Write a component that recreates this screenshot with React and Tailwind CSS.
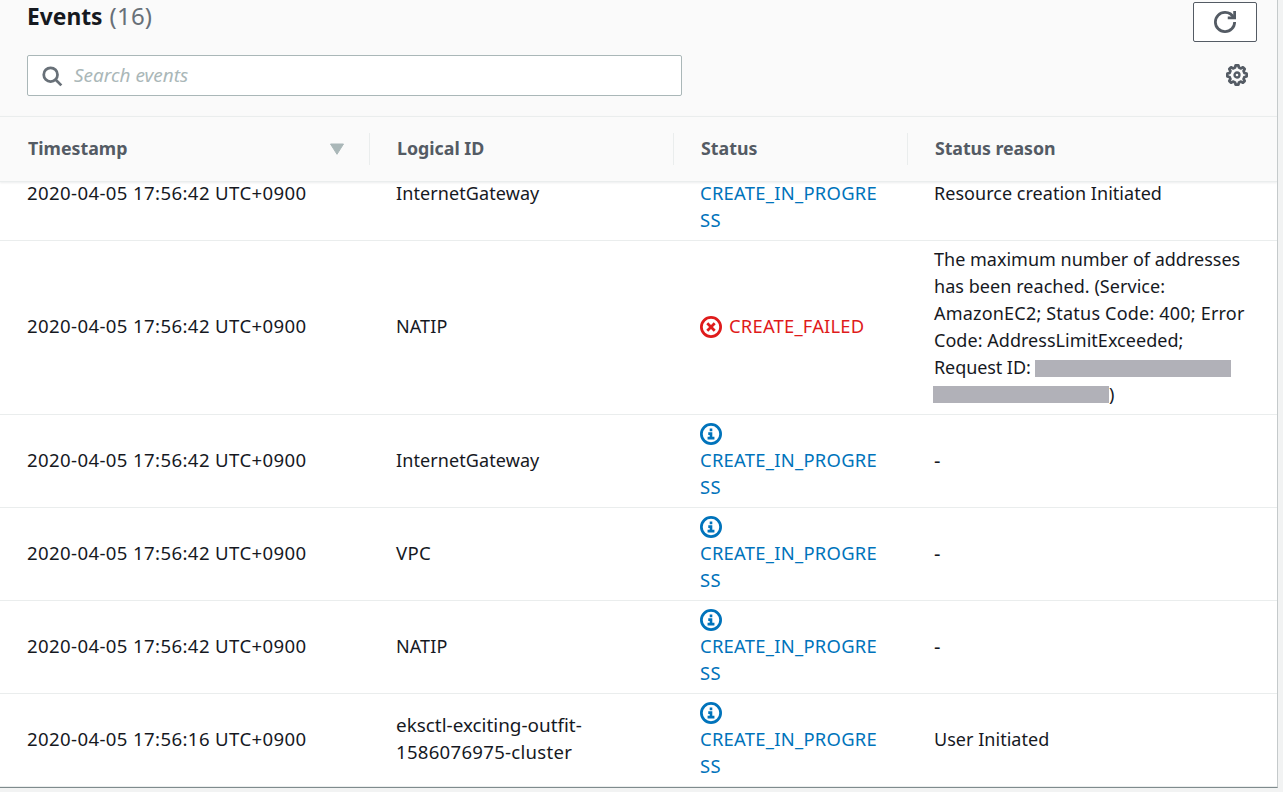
const COLS = "grid grid-cols-[369px_304px_234px_370px]";

const IN_PROGRESS = "progress";
const FAILED = "failed";

const events = [
  { time: "2020-04-05 17:56:42 UTC+0900", id: ["InternetGateway"], status: IN_PROGRESS, reason: "Resource creation Initiated" },
  { time: "2020-04-05 17:56:42 UTC+0900", id: ["NATIP"], status: FAILED, reason: null },
  { time: "2020-04-05 17:56:42 UTC+0900", id: ["InternetGateway"], status: IN_PROGRESS, reason: "-" },
  { time: "2020-04-05 17:56:42 UTC+0900", id: ["VPC"], status: IN_PROGRESS, reason: "-" },
  { time: "2020-04-05 17:56:42 UTC+0900", id: ["NATIP"], status: IN_PROGRESS, reason: "-" },
  { time: "2020-04-05 17:56:16 UTC+0900", id: ["eksctl-exciting-outfit-", "1586076975-cluster"], status: IN_PROGRESS, reason: "User Initiated" },
];

function InfoIcon() {
  return (
    <svg className="block size-[22px]" viewBox="0 0 16 16" fill="none" stroke="currentColor" strokeWidth="2">
      <circle cx="8" cy="8" r="7" />
      <path d="M5.500 11h5M8 11V7.700H6M8 6V4" strokeWidth="1.900" />
    </svg>
  );
}

function ErrorIcon() {
  return (
    <svg className="block size-[22px]" viewBox="0 0 16 16" fill="none" stroke="currentColor" strokeWidth="2">
      <circle cx="8" cy="8" r="7" />
      <path d="M10.700 5.300 5.300 10.700M10.700 10.700 5.300 5.300" />
    </svg>
  );
}

function SearchIcon() {
  return (
    <svg className="size-[22px] shrink-0 text-[#687078]" viewBox="0 0 16 16" fill="none" stroke="currentColor" strokeWidth="2">
      <circle cx="7" cy="7" r="5" />
      <path d="m14.800 14.800-4.300-4.300" />
    </svg>
  );
}

function RefreshIcon() {
  return (
    <svg className="size-[22px]" viewBox="0 0 16 16" fill="none" stroke="currentColor" strokeWidth="2">
      <path d="M10 5h5V0" />
      <path d="M15 8a6.957 6.957 0 0 1-7 7 6.957 6.957 0 0 1-7-7 6.957 6.957 0 0 1 7-7 6.870 6.870 0 0 1 6.300 4" />
    </svg>
  );
}

function GearIcon() {
  return (
    <svg className="size-[22px]" viewBox="0 0 16 16" fill="none" stroke="currentColor" strokeWidth="2" strokeLinejoin="round">
      <path d="M15 9V7l-1.600-.450-.600-1.450.800-1.400-1.300-1.300-1.400.800L9.450 2.600 9 1H7l-.450 1.600-1.450.600-1.400-.800-1.300 1.300.800 1.400-.600 1.450L1 7v2l1.600.450.600 1.450-.800 1.400 1.300 1.300 1.400-.800 1.450.600L7 15h2l.450-1.600 1.450-.600 1.400.800 1.300-1.300-.800-1.400.600-1.450L15 9Z" />
      <circle cx="8" cy="8" r="1.800" strokeWidth="1.700" />
    </svg>
  );
}

function Status({ kind }) {
  if (kind === FAILED) {
    return (
      <div className="flex items-center gap-[7px] text-[#df1b1b]">
        <ErrorIcon />
        <span className="mb-[2px] text-[18.4px] tracking-[0.2px]">CREATE_FAILED</span>
      </div>
    );
  }
  return (
    <div className="text-[18.4px] text-[#0073bb]">
      <div className="flex h-[26px] items-end pb-px">
        <InfoIcon />
      </div>
      <div className="tracking-[0.27px]">CREATE_IN_PROGRE</div>
      <div className="mb-px tracking-[0.3px]">SS</div>
    </div>
  );
}

function FailureReason() {
  return (
    <div className="whitespace-nowrap">
      <div>The maximum number of addresses</div>
      <div className="tracking-[0.05px]">has been reached. (Service:</div>
      <div className="tracking-[0.2px]">AmazonEC2; Status Code: 400; Error</div>
      <div className="tracking-[0.04px]">Code: AddressLimitExceeded;</div>
      <div className="flex items-center">
        <span className="w-[101px] tracking-[-0.08px]">Request ID:</span>
        <span className="mt-[2px] h-[17px] w-[196px] bg-[#b1b1b8]" />
      </div>
      <div className="-ml-px flex items-center">
        <span className="h-[17px] w-[176px] bg-[#b1b1b8]" />
        <span>)</span>
      </div>
    </div>
  );
}

function HeaderCell({ children, divider = true }) {
  return (
    <div className={"my-4 flex items-center justify-between pl-7 " + (divider ? "-mr-px border-r border-[#eaeded]" : "")}>
      {children}
    </div>
  );
}

function EventRow({ event }) {
  const failed = event.status === FAILED;
  return (
    <div className={COLS + " shrink-0 items-center border-b border-[#eaeded] pt-[5px] pb-[6px] leading-[27px]"}>
      <div className={"pl-[27px] text-[18.6px] tracking-[0.38px] " + (failed ? "pb-[3px]" : "pb-[2px]")}>{event.time}</div>
      <div className={"pl-[27px] " + (failed || event.id.length > 1 ? "pb-px" : "")}>
        {event.id.length === 1 ? (
          event.id[0] === "VPC" ? (
            <div className="pb-[2px] text-[18.6px] tracking-[0.3px]">{event.id[0]}</div>
          ) : (
            <div className="tracking-[0.09px]">{event.id[0]}</div>
          )
        ) : (
          <>
            <div className="text-[18.9px]">{event.id[0]}</div>
            <div className="-mt-px mb-px text-[18.6px] tracking-[0.27px]">{event.id[1]}</div>
          </>
        )}
      </div>
      <div className={"pl-[27px] " + (failed ? "pb-px" : "")}>
        <Status kind={event.status} />
      </div>
      <div className="pl-[27px]">
        {event.reason === null ? (
          <FailureReason />
        ) : (
          <div className={event.reason === "-" ? "text-[20px]" : "tracking-[0.03px]"}>{event.reason}</div>
        )}
      </div>
    </div>
  );
}

export default function App() {
  return (
    <div className="h-[792px] w-full overflow-hidden bg-[#f2f3f3] font-['Noto_Sans',sans-serif] text-[18px] text-[#16191f]">
      <section className="flex h-[788px] w-[1278px] flex-col overflow-hidden border-r border-b border-r-[#c5cacb] border-b-[#7f8b8d] bg-white">
        <header className="h-[116px] shrink-0 bg-[#fafafa] pr-5 pl-[27px]">
          <div className="flex h-[55px] items-start justify-between">
            <h1 className="flex gap-[7px] text-[22.8px] leading-[33px]">
              <span className="font-bold">Events</span>
              <span className="-mt-px text-[24px] tracking-[0.2px] text-[#687078]">(16)</span>
            </h1>
            <button className="mt-[2px] flex h-10 w-16 items-center justify-center rounded-[2px] border border-[#545b64] bg-white text-[#545b64]">
              <RefreshIcon />
            </button>
          </div>
          <div className="flex items-center justify-between">
            <div className="flex h-[41px] w-[655px] items-center gap-[11px] rounded-[2px] border border-[#aab7b8] bg-white pl-[13px]">
              <SearchIcon />
              <span className="text-[18.95px] leading-[27px] text-[#aab7b8] italic">Search events</span>
            </div>
            <button className="mr-[9px] mb-[2px] text-[#545b64]">
              <GearIcon />
            </button>
          </div>
        </header>
        <div className={COLS + " z-10 h-[66px] shrink-0 border-t border-b border-[#eaeded] bg-[#fafafa] text-[17.8px] font-bold text-[#545b64] shadow-[0_1px_2px_rgba(0,28,36,0.08)]"}>
          <HeaderCell>
            <span className="mb-[2px]">Timestamp</span>
            <svg className="mr-[25px] h-3 w-[14px]" viewBox="0 0 14 12" fill="#aab7b8" stroke="#aab7b8" strokeLinejoin="round">
              <path d="M.5 1h13L7 11.300Z" />
            </svg>
          </HeaderCell>
          <HeaderCell>
            <span className="mb-[2px]">Logical ID</span>
          </HeaderCell>
          <HeaderCell>
            <span className="mb-[2px]">Status</span>
          </HeaderCell>
          <HeaderCell divider={false}>
            <span className="mb-[2px] tracking-[-0.08px]">Status reason</span>
          </HeaderCell>
        </div>
        <div className="flex min-h-0 flex-1 flex-col justify-end overflow-hidden">
          {events.map((event, i) => (
            <EventRow key={i} event={event} />
          ))}
        </div>
      </section>
    </div>
  );
}
